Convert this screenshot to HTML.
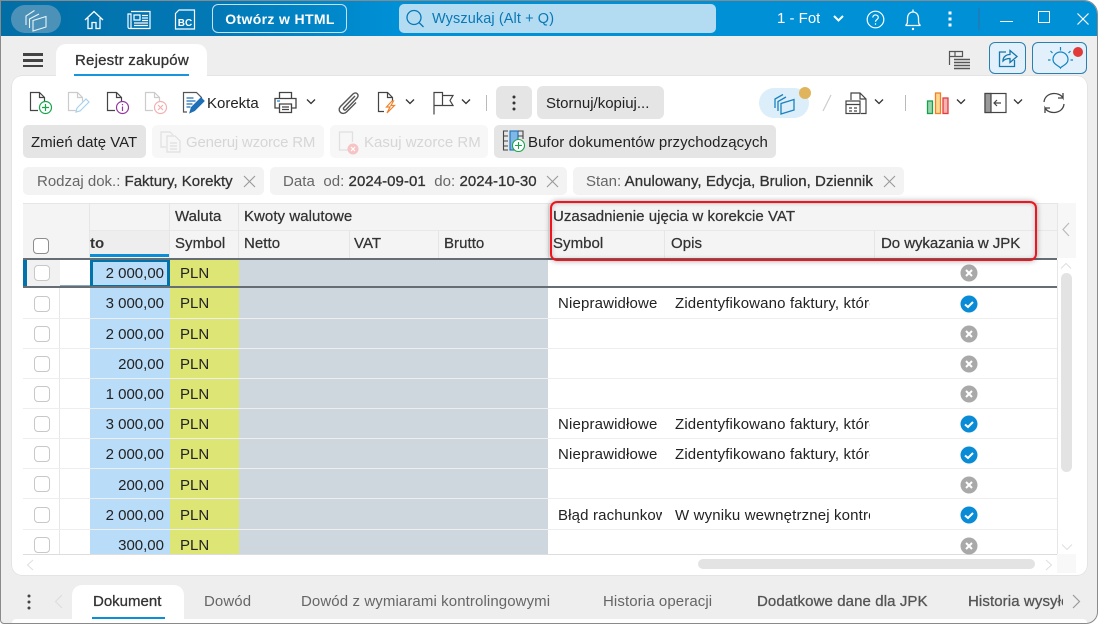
<!DOCTYPE html>
<html><head><meta charset="utf-8"><style>
html,body{margin:0;padding:0;width:1099px;height:625px;overflow:hidden;background:#fff}
body{font-family:"Liberation Sans",sans-serif;font-size:15px;color:#222;position:relative}
div,span.a,svg{position:absolute}
.t{white-space:nowrap;line-height:18px;height:18px;margin-top:1px}
.m{-webkit-text-stroke:.3px currentColor}
.h{color:#333;-webkit-text-stroke:.25px #333;letter-spacing:.05px}
.v{border-left:1px solid #e6e6e6;width:0}
.cb{width:14px;height:14px;left:34px;border:1px solid #c8c8c8;border-radius:4px;background:#fff}
.b{left:90px;width:74px;text-align:right;color:#222}
.p{left:180px;color:#222}
.s{left:558px;width:104px;overflow:hidden;letter-spacing:.15px}
.o{left:675px;width:195px;overflow:hidden;letter-spacing:.15px}
.btn{border-radius:5px;top:125px;height:33px}
.chip{top:167px;height:28px;background:#f3f3f3;border-radius:5px}
.c{color:#666}
.tab{top:592px;color:#666;letter-spacing:.1px}
</style></head><body>
<div style="left:0;top:0;width:1098px;height:624px;background:#eee;border-radius:0 14px 12px 4px;border:1px solid #8a8a8a;border-width:1px 1px 1px 1px;box-sizing:border-box;overflow:hidden"></div>
<div style="left:1px;top:1px;width:1096px;height:35px;background:linear-gradient(90deg,#026ea6 0,#0279b6 20%,#0090d6 36%,#0090d6 100%);border-radius:0 13px 0 0"></div>

<div style="left:11px;top:5px;width:50px;height:28px;border-radius:14px;background:#4b91b8"></div>
<svg style="left:24px;top:8px" width="24" height="24" viewBox="0 0 24 24" fill="none" stroke="#eaf4fa" stroke-width="1.100"><path d="M2 17V8l8.500-5.500M5.500 20V11l9.500-5"/><path d="M9 23V12.500L22 8.500v10.500z"/></svg>
<svg style="left:84px;top:10px" width="20" height="20" viewBox="0 0 20 20" fill="none" stroke="#fff" stroke-width="1.300"><path d="M1 10 10 1.500 19 10M4 8v10.500h4v-6h4v6h4V8"/></svg>
<svg style="left:127px;top:10px" width="24" height="20" viewBox="0 0 24 20" fill="none" stroke="#fff" stroke-width="1.200"><path d="M4 1.500h19v17H2.500a1.500 1.500 0 0 1-1.500-1.500V4h3v14M7 5h6v5H7zM15 5.500h6M15 8h6M15 10.500h6M7 13h14M7 15.500h14"/></svg>
<svg style="left:174px;top:9px" width="22" height="21" viewBox="0 0 22 21" fill="none" stroke="#fff" stroke-width="1.200"><path d="M5 1h15.500v19H1.500V4.500z"/></svg>
<div class="t" style="left:174px;top:12px;width:22px;text-align:center;color:#fff;font-size:10px;font-weight:bold;padding-top:2px">BC</div>
<div style="left:212px;top:4px;width:133px;height:27px;border:1.500px solid #c5e2f2;border-radius:6px"></div>
<div class="t" style="left:212px;top:9px;width:136px;text-align:center;color:#fff;font-size:14px;font-weight:bold;letter-spacing:.35px">Otwórz w HTML</div>

<div style="left:399px;top:4px;width:317px;height:29px;background:#b3dcf3;border-radius:5px"></div>
<svg style="left:405px;top:9px" width="20" height="20" viewBox="0 0 20 20" fill="none" stroke="#0a78b4" stroke-width="1.300"><circle cx="9" cy="8.500" r="7"/><path d="m14 13.500 4.500 4.500"/></svg>
<div class="t" style="left:432px;top:9px;color:#0a78b4;font-size:14.500px;letter-spacing:.1px">Wyszukaj (Alt + Q)</div>

<div class="t" style="left:777px;top:9px;width:43px;overflow:hidden;color:#fff;font-size:15px">1 - Fotowoltaika</div>
<svg style="left:832px;top:14px" width="13" height="10" viewBox="0 0 13 10" fill="none" stroke="#fff" stroke-width="2"><path d="m2 2 4.500 4.500L11 2"/></svg>
<svg style="left:866px;top:10px" width="19" height="19" viewBox="0 0 19 19" fill="none" stroke="#fff" stroke-width="1.200"><circle cx="9.500" cy="9.500" r="8.300"/><path d="M6.800 7.500c0-3.500 5.600-3.300 5.500 0 0 2-2.800 2-2.800 4.300M9.500 13.300v1.500"/></svg>
<svg style="left:904px;top:8px" width="18" height="23" viewBox="0 0 18 23" fill="none" stroke="#fff" stroke-width="1.300"><path d="M1.500 17.500c2-1 2-3 2-7 0-4 2.300-6.500 5.500-6.500s5.500 2.500 5.500 6.500c0 4 0 6 2 7zM9 1.500V4"/><circle cx="9" cy="21" r="1.200" fill="#fff" stroke="none"/></svg>
<svg style="left:948px;top:11px" width="4" height="16" viewBox="0 0 4 16" fill="#fff"><rect x=".5" y=".5" width="3" height="3"/><rect x=".5" y="6.500" width="3" height="3"/><rect x=".5" y="12.500" width="3" height="3"/></svg>
<div style="left:978px;top:8px;width:2px;height:22px;background:#1a80bd"></div>
<div style="left:1000px;top:21px;width:13px;height:1px;background:#fff"></div>
<div style="left:1038px;top:11px;width:10px;height:10px;border:1.200px solid #fff"></div>
<svg style="left:1076px;top:12px" width="14" height="14" viewBox="0 0 14 14" stroke="#fff" stroke-width="1.200"><path d="m1.500 1.500 11 11M12.500 1.500l-11 11"/></svg>

<div style="left:23px;top:53px;width:20px;height:3px;background:#444"></div>
<div style="left:23px;top:59px;width:20px;height:3px;background:#444"></div>
<div style="left:23px;top:65px;width:20px;height:2px;background:#444"></div>
<div style="left:56px;top:44px;width:151px;height:36px;background:#fff;border-radius:10px 10px 0 0"></div>
<div class="t m" style="left:75px;top:51px;color:#333;letter-spacing:.2px">Rejestr zakupów</div>
<div style="left:74px;top:74px;width:115px;height:2px;background:#1a95dc"></div>

<svg style="left:948px;top:50px" width="23" height="20" viewBox="0 0 23 20" fill="none" stroke="#555" stroke-width="1.200"><path d="M1.500 15V1.500h13v5H1.500M7 1.500v5"/><path d="M6 9.500h16M6 12.500h16M6 15.500h16M6 18.500h16" stroke-width="1.500"/></svg>
<div style="left:989px;top:42px;width:35px;height:30px;background:#e1f0fa;border:1px solid #2a7fb0;border-radius:6px"></div>
<svg style="left:998px;top:48px" width="20" height="20" viewBox="0 0 20 20" fill="none" stroke="#1477ad" stroke-width="1.300"><path d="M8 4H1.500v14.500h15V12M5 13c0-4 3-6.500 7-6.500V2.500l7 6-7 6v-4c-3 0-5.500 1-7 2.500Z"/></svg>
<div style="left:1032px;top:42px;width:53px;height:30px;background:#e1f0fa;border:1px solid #2a7fb0;border-radius:6px"></div>
<svg style="left:1047px;top:45px" width="27" height="25" viewBox="0 0 27 25" fill="none" stroke="#1285c5" stroke-width="1.200"><path d="M13.500 23c-1-2-7.500-3.500-7.500-8.500a7.500 7.500 0 0 1 15 0c0 5-6.500 6.500-7.500 8.500ZM13.500 2v3.500M3.500 6l2 2M23.500 6l-2 2M1 15h2.500M23.500 15H26"/></svg>
<div style="left:1073px;top:47px;width:10px;height:10px;border-radius:50%;background:#e03a3a"></div>

<div style="left:12px;top:76px;width:1075px;height:499px;background:#fff;border-radius:10px;box-shadow:0 0 0 .6px #ddd"></div>
<div style="left:56px;top:70px;width:151px;height:10px;background:#fff"></div>
<div style="left:74px;top:74px;width:115px;height:2px;background:#1a95dc"></div>

<svg style="left:29px;top:91px" width="24" height="24" viewBox="0 0 24 24" fill="none" stroke="#444" stroke-width="1.200"><path d="M9 19.500H1.500V1.500h9l5 5v4M10.500 1.500v5h5"/><circle cx="16.500" cy="16.500" r="6" stroke="#17a64c"/><path d="M16.500 13v7M13 16.500h7" stroke="#17a64c"/></svg>
<svg style="left:67px;top:91px" width="24" height="24" viewBox="0 0 24 24" fill="none" stroke="#ccc" stroke-width="1.200"><path d="M9 19.500H1.500V1.500h9l5 5v4M10.500 1.500v5h5"/><path d="m9 21 1-4 9-9 3 3-9 9z" stroke="#a8d2ee"/></svg>
<svg style="left:106px;top:91px" width="24" height="24" viewBox="0 0 24 24" fill="none" stroke="#444" stroke-width="1.200"><path d="M9 19.500H1.500V1.500h9l5 5v4M10.500 1.500v5h5"/><circle cx="16.500" cy="16.500" r="6" stroke="#93379f"/><path d="M16.500 15.500v4.500M16.500 13v1.200" stroke="#93379f"/></svg>
<svg style="left:144px;top:91px" width="24" height="24" viewBox="0 0 24 24" fill="none" stroke="#ccc" stroke-width="1.200"><path d="M9 19.500H1.500V1.500h9l5 5v4M10.500 1.500v5h5"/><circle cx="16.500" cy="16.500" r="6" stroke="#f2b0b0"/><path d="m14 14 5 5M19 14l-5 5" stroke="#f2b0b0"/></svg>
<svg style="left:182px;top:91px" width="24" height="24" viewBox="0 0 24 24" fill="none" stroke="#555" stroke-width="1.200"><path d="M5 21H1.500V1.500h13l5 5v3"/><path d="M4.500 7h7M4.500 10h9M4.500 13h6M4.500 16h4" stroke="#1e6fb8"/><path d="m8 21.500 1.500-5L19 7l3 3-9.500 9.500z" fill="#1e6fb8" stroke="#1e6fb8"/></svg>
<div class="t" style="left:207px;top:94px;color:#222">Korekta</div>
<svg style="left:274px;top:91px" width="23" height="23" viewBox="0 0 23 23" fill="none" stroke="#444" stroke-width="1.300"><path d="M5.500 7V1.500h12V7M5 17H1V7.500h21V17h-4M5.500 13h12v8.500h-12zM8 16h7M8 18.500h7"/><path d="M3 10h3" stroke="#1a8ad0"/></svg>
<svg class="ch" style="left:306px;top:98px" width="10" height="8" viewBox="0 0 10 8" fill="none" stroke="#333" stroke-width="1.300"><path d="m1 1.500 4 4 4-4"/></svg>
<svg style="left:336px;top:91px" width="24" height="24" viewBox="0 0 24 24" fill="none" stroke="#555" stroke-width="1.400"><path d="M19 5 8 16.500c-1.500 1.500 .5 3.500 2 2L21 7c3-3-1-7-4-4L4.500 15.500c-4 4.500 2 9.500 6 5.500L20 11.500"/></svg>
<svg style="left:377px;top:91px" width="22" height="24" viewBox="0 0 22 24" fill="none" stroke="#444" stroke-width="1.200"><path d="M7 20.500H1.500v-19h9l5 5v3M10.500 1.500v5h5"/><path d="m15 10-5.500 6H13l-3 6 7.500-7.500H14l2.500-4.500z" stroke="#f0822d"/></svg>
<svg class="ch" style="left:405px;top:98px" width="10" height="8" viewBox="0 0 10 8" fill="none" stroke="#333" stroke-width="1.300"><path d="m1 1.500 4 4 4-4"/></svg>
<svg style="left:433px;top:91px" width="21" height="24" viewBox="0 0 21 24" fill="none" stroke="#444" stroke-width="1.200"><path d="M1 23.500V1.500h8.500v3H20l-3 5 3 5H9.500v-10M1 14.500h8.500"/></svg>
<svg class="ch" style="left:461px;top:98px" width="10" height="8" viewBox="0 0 10 8" fill="none" stroke="#333" stroke-width="1.300"><path d="m1 1.500 4 4 4-4"/></svg>
<div style="left:486px;top:95px;width:1px;height:16px;background:#bbb"></div>
<div style="left:496px;top:86px;width:36px;height:33px;background:#e5e5e5;border-radius:6px"></div>
<svg style="left:512px;top:95px" width="4" height="16" viewBox="0 0 4 16" fill="#333"><circle cx="2" cy="2" r="1.500"/><circle cx="2" cy="8" r="1.500"/><circle cx="2" cy="14" r="1.500"/></svg>
<div style="left:537px;top:86px;width:127px;height:33px;background:#e5e5e5;border-radius:6px"></div>
<div class="t" style="left:546px;top:94px;color:#222">Stornuj/kopiuj...</div>

<div style="left:759px;top:88px;width:50px;height:30px;border-radius:15px;background:#dceefa"></div>
<svg style="left:773px;top:91px" width="24" height="25" viewBox="0 0 24 25" fill="none" stroke="#1a82bd" stroke-width="1.300"><path d="M2 17V8l8-4.500M5 20V10.500l8-4.500M8 23V12.500L21 8.500v10.500z"/></svg>
<div style="left:799px;top:87px;width:12px;height:12px;border-radius:50%;background:#e0b45c"></div>
<svg style="left:822px;top:94px" width="10" height="18" viewBox="0 0 10 18" stroke="#ccc" stroke-width="1.200"><path d="M9 1 1 17"/></svg>
<svg style="left:845px;top:91px" width="24" height="24" viewBox="0 0 24 24" fill="none" stroke="#444" stroke-width="1.200"><path d="M6 9V2h9l6 6v14.500h-5M15 2v6h6"/><rect x="1" y="10" width="14" height="12.500" fill="#fff"/><path d="M1 13.500h14M4 17h3M9 17h3M4 20h3M9 20h3"/></svg>
<svg class="ch" style="left:874px;top:98px" width="10" height="8" viewBox="0 0 10 8" fill="none" stroke="#333" stroke-width="1.300"><path d="m1 1.500 4 4 4-4"/></svg>
<div style="left:905px;top:95px;width:1px;height:16px;background:#bbb"></div>
<svg style="left:926px;top:91px" width="24" height="24" viewBox="0 0 24 24" stroke-width="1.300"><rect x="1.500" y="10" width="5" height="12.500" fill="#9ad6ad" stroke="#17a04a"/><rect x="9.500" y="2" width="5" height="20.500" fill="#fcd98f" stroke="#f07f2a"/><rect x="17" y="7" width="5" height="15.500" fill="#f6b3b3" stroke="#e33b3b"/></svg>
<svg class="ch" style="left:956px;top:98px" width="10" height="8" viewBox="0 0 10 8" fill="none" stroke="#333" stroke-width="1.300"><path d="m1 1.500 4 4 4-4"/></svg>
<svg style="left:984px;top:92px" width="23" height="22" viewBox="0 0 23 22" fill="none" stroke="#444" stroke-width="1.200"><rect x="1" y="1.500" width="21" height="19"/><rect x="1" y="1.500" width="6" height="19" fill="#999"/><path d="M17 11h-7M13 8l-3 3 3 3"/></svg>
<svg class="ch" style="left:1013px;top:98px" width="10" height="8" viewBox="0 0 10 8" fill="none" stroke="#333" stroke-width="1.300"><path d="m1 1.500 4 4 4-4"/></svg>
<svg style="left:1042px;top:91px" width="24" height="24" viewBox="0 0 24 24" fill="none" stroke="#444" stroke-width="1.300"><path d="M2 11C3 1 17 0 21 7V2M21 7h-5M22 13c-1 10-15 11-19 4v5M3 17h5"/></svg>

<div class="btn" style="left:23px;width:123px;background:#e5e5e5"></div>
<div class="t" style="left:31px;top:133px;color:#222">Zmień datę VAT</div>
<div class="btn" style="left:152px;width:172px;background:#f7f7f7"></div>
<svg style="left:159px;top:130px" width="24" height="24" viewBox="0 0 24 24" fill="none" stroke="#e0e0e0" stroke-width="1.200"><path d="M7 17H2V2h9l3 3M8 6h8l5 5v11H8zM11 13h7M11 16h7M11 19h7"/></svg>
<div class="t" style="left:186px;top:133px;color:#d6d6d6;letter-spacing:-.2px">Generuj wzorce RM</div>
<div class="btn" style="left:330px;width:158px;background:#f7f7f7"></div>
<svg style="left:338px;top:129px" width="24" height="26" viewBox="0 0 24 26" fill="none" stroke="#e0e0e0" stroke-width="1.200"><path d="M10 21H1.500V3h13v10"/><circle cx="15" cy="20" r="5.500" fill="#f6c4c4" stroke="none"/><path d="m13 18 4 4M17 18l-4 4" stroke="#fff"/></svg>
<div class="t" style="left:364px;top:133px;color:#d6d6d6">Kasuj wzorce RM</div>
<div class="btn" style="left:494px;width:282px;background:#e5e5e5"></div>
<svg style="left:502px;top:129px" width="24" height="24" viewBox="0 0 24 24" fill="none" stroke="#444" stroke-width="1.100"><rect x="8" y="2" width="8" height="19" fill="#7fb7e6" stroke="#1a6fb8"/><path d="M6 2H1.500v19H6M1.500 7H6M1.500 12H6M1.500 17H6M16 2h5v8M16 7h5"/><circle cx="16.500" cy="16.500" r="6" fill="#fff" stroke="#17a64c"/><path d="M16.500 13v7M13 16.500h7" stroke="#17a64c"/></svg>
<div class="t" style="left:528px;top:133px;color:#222;letter-spacing:.1px">Bufor dokumentów przychodzących</div>

<div class="chip" style="left:23px;width:241px"></div>
<div class="t c" style="left:37px;top:172px">Rodzaj dok.: <span class="m" style="color:#333">Faktury, Korekty</span></div>
<svg style="left:243px;top:175px" width="13" height="13" viewBox="0 0 13 13" stroke="#999" stroke-width="1.100"><path d="m1 1 11 11M12 1 1 12"/></svg>
<div class="chip" style="left:270px;width:297px"></div>
<div class="t c" style="left:283px;top:172px;letter-spacing:.05px">Data&nbsp; od: <span class="m" style="color:#333">2024-09-01</span>&nbsp; do: <span class="m" style="color:#333">2024-10-30</span></div>
<svg style="left:546px;top:175px" width="13" height="13" viewBox="0 0 13 13" stroke="#999" stroke-width="1.100"><path d="m1 1 11 11M12 1 1 12"/></svg>
<div class="chip" style="left:573px;width:331px"></div>
<div class="t c" style="left:586px;top:172px;letter-spacing:.05px">Stan: <span class="m" style="color:#333">Anulowany, Edycja, Brulion, Dziennik</span></div>
<svg style="left:883px;top:175px" width="13" height="13" viewBox="0 0 13 13" stroke="#999" stroke-width="1.100"><path d="m1 1 11 11M12 1 1 12"/></svg>

<!-- table header -->
<div style="left:23px;top:203px;width:1053px;height:55px;background:#f4f4f4;border-top:1px solid #e6e6e6;box-sizing:border-box"></div>
<div style="left:1057px;top:203px;width:19px;height:55px;background:#f7f7f7"></div>
<div style="left:90px;top:230px;width:80px;height:24px;background:#eee"></div>
<div style="left:90px;top:254px;width:80px;height:3px;background:#0a8fd6"></div>
<div style="left:90px;top:230px;width:967px;height:1px;background:#e8e8e8"></div>
<div class="v" style="left:89px;top:203px;height:55px"></div>
<div class="v" style="left:169px;top:203px;height:55px"></div>
<div class="v" style="left:238px;top:203px;height:55px"></div>
<div class="v" style="left:349px;top:231px;height:27px"></div>
<div class="v" style="left:438px;top:231px;height:27px"></div>
<div class="v" style="left:548px;top:203px;height:55px"></div>
<div class="v" style="left:664px;top:231px;height:27px"></div>
<div class="v" style="left:874px;top:231px;height:27px"></div>
<div class="v" style="left:1057px;top:203px;height:55px"></div>
<div style="left:33px;top:238px;width:14px;height:14px;border:1px solid #8d8d8d;border-radius:4px;background:#fff"></div>
<div class="t h" style="left:90px;top:234px;font-weight:bold;-webkit-text-stroke:0;letter-spacing:0">to</div>
<div class="t h" style="left:175px;top:207px">Waluta</div>
<div class="t h" style="left:175px;top:234px">Symbol</div>
<div class="t h" style="left:244px;top:207px">Kwoty walutowe</div>
<div class="t h" style="left:244px;top:234px">Netto</div>
<div class="t h" style="left:354px;top:234px">VAT</div>
<div class="t h" style="left:444px;top:234px">Brutto</div>
<div class="t h" style="left:553px;top:207px">Uzasadnienie ujęcia w korekcie VAT</div>
<div class="t h" style="left:553px;top:234px">Symbol</div>
<div class="t h" style="left:671px;top:234px">Opis</div>
<div class="t h" style="left:881px;top:234px;letter-spacing:-.05px">Do wykazania w JPK</div>
<svg style="left:1061px;top:222px" width="10" height="15" viewBox="0 0 10 15" fill="none" stroke="#bbb" stroke-width="1.200"><path d="M8 1 2 7.500 8 14"/></svg>

<!-- column fills -->
<div style="left:90px;top:260px;width:80px;height:294px;background:#b9dcf9"></div>
<div style="left:170px;top:260px;width:69px;height:294px;background:#dde674"></div>
<div style="left:239px;top:260px;width:309px;height:294px;background:#cfd7de"></div>
<div class="v" style="left:59px;top:260px;height:294px"></div>
<!-- row lines -->
<div style="left:23px;top:318px;width:1034px;height:1px;background:#eee"></div>
<div style="left:23px;top:348px;width:1034px;height:1px;background:#eee"></div>
<div style="left:23px;top:378px;width:1034px;height:1px;background:#eee"></div>
<div style="left:23px;top:408px;width:1034px;height:1px;background:#eee"></div>
<div style="left:23px;top:438px;width:1034px;height:1px;background:#eee"></div>
<div style="left:23px;top:468px;width:1034px;height:1px;background:#eee"></div>
<div style="left:23px;top:498px;width:1034px;height:1px;background:#eee"></div>
<div style="left:23px;top:529px;width:1034px;height:1px;background:#eee"></div>
<div style="left:23px;top:554px;width:1034px;height:1px;background:#ddd"></div>
<!-- selected row -->
<div style="left:23px;top:260px;width:37px;height:26px;background:#f1f1f1"></div>
<div style="left:23px;top:260px;width:4px;height:26px;background:#0272ab"></div>
<div style="left:60px;top:285px;width:30px;height:1px;background:#8aa9bd"></div>
<div style="left:90px;top:260px;height:28px;box-sizing:border-box;border:3px solid #0272ab;border-top-width:2px;width:80px"></div>
<div style="left:23px;top:258px;width:1034px;height:2px;background:#666e73"></div>
<div style="left:23px;top:286px;width:1034px;height:2px;background:#666e73"></div>

<!-- checkboxes -->
<div class="cb" style="top:265px"></div><div class="cb" style="top:296px"></div><div class="cb" style="top:326px"></div><div class="cb" style="top:356px"></div><div class="cb" style="top:386px"></div><div class="cb" style="top:416px"></div><div class="cb" style="top:446px"></div><div class="cb" style="top:476px"></div><div class="cb" style="top:507px"></div><div class="cb" style="top:537px"></div>

<div class="t b" style="top:264px">2 000,00</div><div class="t p" style="top:264px">PLN</div>
<div class="t b" style="top:294px">3 000,00</div><div class="t p" style="top:294px">PLN</div>
<div class="t b" style="top:325px">2 000,00</div><div class="t p" style="top:325px">PLN</div>
<div class="t b" style="top:355px">200,00</div><div class="t p" style="top:355px">PLN</div>
<div class="t b" style="top:385px">1 000,00</div><div class="t p" style="top:385px">PLN</div>
<div class="t b" style="top:415px">3 000,00</div><div class="t p" style="top:415px">PLN</div>
<div class="t b" style="top:445px">2 000,00</div><div class="t p" style="top:445px">PLN</div>
<div class="t b" style="top:476px">200,00</div><div class="t p" style="top:476px">PLN</div>
<div class="t b" style="top:506px">2 000,00</div><div class="t p" style="top:506px">PLN</div>
<div class="t b" style="top:536px">300,00</div><div class="t p" style="top:536px">PLN</div>

<div class="t s" style="top:294px">Nieprawidłowe</div><div class="t o" style="top:294px">Zidentyfikowano faktury, które</div>
<div class="t s" style="top:415px">Nieprawidłowe</div><div class="t o" style="top:415px">Zidentyfikowano faktury, które</div>
<div class="t s" style="top:445px">Nieprawidłowe</div><div class="t o" style="top:445px">Zidentyfikowano faktury, które</div>
<div class="t s" style="top:506px">Błąd rachunkowy</div><div class="t o" style="top:506px">W wyniku wewnętrznej kontroli</div>

<!-- status icons -->
<svg width="0" height="0" style="left:0;top:0"><defs>
<g id="x"><circle cx="9" cy="9" r="8.500" fill="#a9a9a9"/><path d="m6 6 6 6M12 6l-6 6" stroke="#fff" stroke-width="2"/></g>
<g id="k"><circle cx="9" cy="9" r="8.500" fill="#0a8bd6"/><path d="m5 9.500 3 2.500 5-5" stroke="#fff" stroke-width="2" fill="none"/></g>
</defs></svg>
<svg style="left:960px;top:264px" width="18" height="18"><use href="#x"/></svg>
<svg style="left:960px;top:295px" width="18" height="18"><use href="#k"/></svg>
<svg style="left:960px;top:325px" width="18" height="18"><use href="#x"/></svg>
<svg style="left:960px;top:355px" width="18" height="18"><use href="#x"/></svg>
<svg style="left:960px;top:385px" width="18" height="18"><use href="#x"/></svg>
<svg style="left:960px;top:415px" width="18" height="18"><use href="#k"/></svg>
<svg style="left:960px;top:446px" width="18" height="18"><use href="#k"/></svg>
<svg style="left:960px;top:476px" width="18" height="18"><use href="#x"/></svg>
<svg style="left:960px;top:506px" width="18" height="18"><use href="#k"/></svg>
<svg style="left:960px;top:537px" width="18" height="18"><use href="#x"/></svg>

<!-- red highlight -->
<div style="left:550px;top:201px;width:487px;height:60px;box-sizing:border-box;border:2px solid #f0141e;border-radius:7px;box-shadow:0 0 6px rgba(0,0,0,.35),inset 0 0 5px rgba(0,0,0,.22)"></div>

<!-- scrollbars -->
<svg style="left:1060px;top:262px" width="12" height="8" viewBox="0 0 12 8" fill="none" stroke="#e0e0e0" stroke-width="1.100"><path d="m1 6.500 5-5 5 5"/></svg>
<div style="left:1061px;top:273px;width:11px;height:199px;background:#e3e3e3;border-radius:5.500px"></div>
<svg style="left:1061px;top:543px" width="12" height="8" viewBox="0 0 12 8" fill="none" stroke="#e0e0e0" stroke-width="1.100"><path d="m1 1.500 5 5 5-5"/></svg>
<div style="left:1057px;top:260px;width:1px;height:294px;background:#e6e6e6"></div>
<svg style="left:26px;top:559px" width="8" height="12" viewBox="0 0 8 12" fill="none" stroke="#e0e0e0" stroke-width="1.100"><path d="M7 1 1.500 6 7 11"/></svg>
<div style="left:698px;top:559px;width:337px;height:10px;background:#e3e3e3;border-radius:5px"></div>
<svg style="left:1045px;top:559px" width="8" height="12" viewBox="0 0 8 12" fill="none" stroke="#e0e0e0" stroke-width="1.100"><path d="M1 1 6.500 6 1 11"/></svg>
<div style="left:1057px;top:554px;width:19px;height:19px;background:#f8f8f8"></div>

<!-- bottom tabs -->
<div style="left:12px;top:619px;width:1075px;height:4px;background:#fff;border-radius:8px 8px 0 0"></div>
<svg style="left:27px;top:594px" width="4" height="16" viewBox="0 0 4 16" fill="#444"><circle cx="2" cy="2" r="1.500"/><circle cx="2" cy="8" r="1.500"/><circle cx="2" cy="14" r="1.500"/></svg>
<svg style="left:54px;top:594px" width="9" height="15" viewBox="0 0 9 15" fill="none" stroke="#ddd" stroke-width="1.200"><path d="M8 1 1.500 7.500 8 14"/></svg>
<div style="left:72px;top:585px;width:112px;height:36px;background:#fff;border-radius:10px 10px 0 0"></div>
<div class="t m" style="left:93px;top:592px;color:#333">Dokument</div>
<div style="left:92px;top:617px;width:73px;height:2px;background:#0a8fd6"></div>
<div class="t tab" style="left:204px">Dowód</div>
<div class="t tab" style="left:301px">Dowód z wymiarami kontrolingowymi</div>
<div class="t tab" style="left:603px">Historia operacji</div>
<div class="t tab m" style="left:757px;color:#555">Dodatkowe dane dla JPK</div>
<div class="t tab m" style="left:968px;width:95px;overflow:hidden;color:#555">Historia wysyłek</div>
<svg style="left:1072px;top:594px" width="9" height="15" viewBox="0 0 9 15" fill="none" stroke="#999" stroke-width="1.200"><path d="M1 1 7.500 7.500 1 14"/></svg>
</body></html>
